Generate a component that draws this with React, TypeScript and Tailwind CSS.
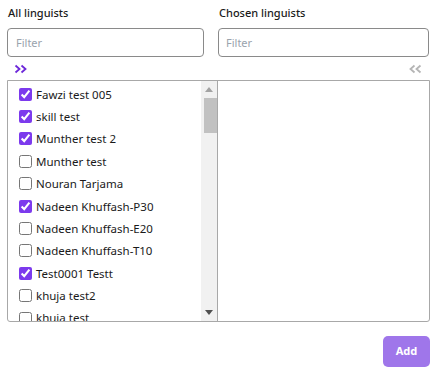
const linguists = [
  { name: "Fawzi test 005", checked: true },
  { name: "skill test", checked: true },
  { name: "Munther test 2", checked: true },
  { name: "Munther test", checked: false },
  { name: "Nouran Tarjama", checked: false },
  { name: "Nadeen Khuffash-P30", checked: true },
  { name: "Nadeen Khuffash-E20", checked: false },
  { name: "Nadeen Khuffash-T10", checked: false },
  { name: "Test0001 Testt", checked: true },
  { name: "khuja test2", checked: false },
  { name: "khuja test", checked: false },
]

const App = () => {
  return (
    <div
      className="w-[439px] h-[370px] bg-white text-[#1a1a1a] px-[7px] pt-[5px]"
      style={{ fontFamily: '"Noto Sans", "Liberation Sans", sans-serif' }}
    >
      <div className="flex">
        {/* Left column */}
        <div className="w-[210px] flex flex-col">
          <div className="text-[11px] font-medium pl-[1px] h-[16px] leading-[16px]">All linguists</div>
          <input
            placeholder="Filter"
            className="mt-[7px] w-[197px] h-[29px] border border-[#8a8a8a] rounded-[4px] px-[8px] text-[11px] placeholder:text-[#9aa3ad] outline-none"
          />
          <div className="h-[23px] flex items-center pl-[7px]">
            <svg width="14" height="10" viewBox="0 0 14 10" fill="none" stroke="#6d28d9" strokeWidth="1.8">
              <path d="M1.5 1.5 L5.5 5 L1.5 8.5" />
              <path d="M7.5 1.5 L11.5 5 L7.5 8.5" />
            </svg>
          </div>
        </div>
        {/* Right column */}
        <div className="w-[211px] ml-[1px] flex flex-col">
          <div className="text-[11px] font-medium pl-[1px] h-[16px] leading-[16px]">Chosen linguists</div>
          <input
            placeholder="Filter"
            className="mt-[7px] w-[211px] h-[29px] border border-[#8a8a8a] rounded-[4px] px-[7px] text-[11px] placeholder:text-[#9aa3ad] outline-none"
          />
          <div className="h-[23px] flex items-center justify-end pr-[7px]">
            <svg width="14" height="10" viewBox="0 0 14 10" fill="none" stroke="#b5b5b5" strokeWidth="1.8">
              <path d="M6.5 1.5 L2.5 5 L6.5 8.5" />
              <path d="M12.5 1.5 L8.5 5 L12.5 8.5" />
            </svg>
          </div>
        </div>
      </div>

      <div className="flex h-[242px] border border-[#a8a8a8] rounded-b-[3px] w-[423px]">
        <div className="w-[210px] h-full flex border-r border-[#a8a8a8]">
          <div className="flex-1 h-full overflow-hidden pt-[2px]">
            {linguists.map((item, i) => (
              <label key={i} className="flex items-center h-[22.4px] pl-[11px] gap-[4px]">
                <input
                  type="checkbox"
                  defaultChecked={item.checked}
                  className="w-[13px] h-[13px] m-0 accent-[#7c3aed]"
                />
                <span className="text-[11.5px] whitespace-nowrap">{item.name}</span>
              </label>
            ))}
          </div>
          {/* scrollbar */}
          <div className="w-[16px] h-full bg-[#f1f1f1] flex flex-col items-center">
            <div className="h-[17px] w-full flex items-center justify-center">
              <svg width="8" height="5" viewBox="0 0 8 5">
                <path d="M0 5 L4 0 L8 5 Z" fill="#a3a3a3" />
              </svg>
            </div>
            <div className="w-[13px] ml-[2px] h-[35px] bg-[#c1c1c1]" />
            <div className="flex-1" />
            <div className="h-[17px] w-full flex items-center justify-center">
              <svg width="8" height="5" viewBox="0 0 8 5">
                <path d="M0 0 L8 0 L4 5 Z" fill="#505050" />
              </svg>
            </div>
          </div>
        </div>
        <div className="flex-1 h-full" />
      </div>

      <div className="flex justify-end mt-[14px] w-[423px]">
        <button className="w-[47px] h-[31px] rounded-[5px] bg-[#9f76ea] text-white text-[11px] font-bold">
          Add
        </button>
      </div>
    </div>
  )
}

export default App
